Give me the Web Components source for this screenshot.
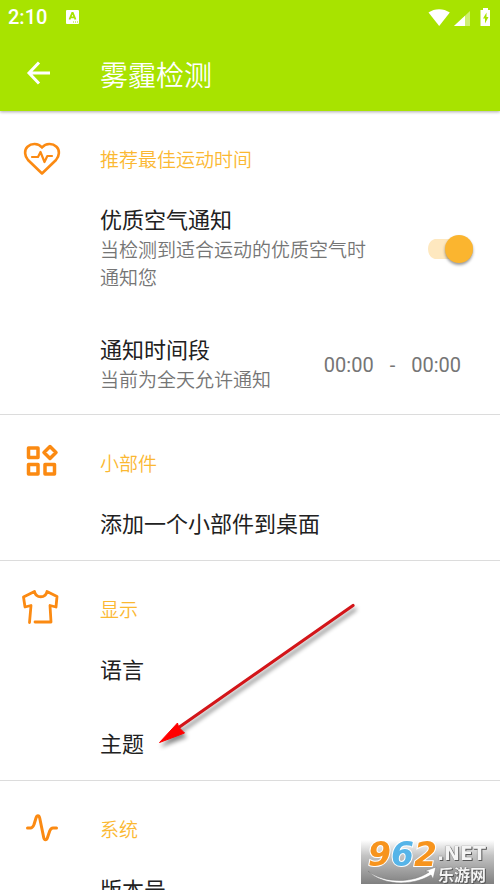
<!DOCTYPE html>
<html lang="zh-CN">
<head>
<meta charset="utf-8">
<meta name="viewport" content="width=device-width, initial-scale=1">
<title>雾霾检测</title>
<style>
  body {
    margin: 0;
    height: 100vh;
    overflow: hidden;
    background: #fff;
    font-family: Roboto, "Noto Sans CJK SC", sans-serif;
    color: #212121;
  }
</style>
</head>
<body>
<haze-settings></haze-settings>
<script>
const define = (name, html, setup) => {
  const template = document.createElement('template');
  template.innerHTML = html;
  customElements.define(name, class extends HTMLElement {
    constructor() {
      super();
      this.attachShadow({ mode: 'open' }).append(template.content.cloneNode(true));
    }
    connectedCallback() {
      if (setup) setup(this, this.shadowRoot);
    }
  });
};

define('status-bar', `
  <style>
    :host { display: flex; align-items: center; height: 34px; padding: 0 8px; color: #fff; font-size: 20px; font-weight: 500; }
    svg { display: block; }
    .app { margin-left: 18px; }
    .right { margin-left: auto; }
  </style>
  <span>2:10</span>
  <svg class="app" width="15" height="16" viewBox="0 0 15 16">
    <rect x="1" y="1" width="13" height="14" rx="1" fill="#fff"/>
    <path d="M4.500 10.500 7.200 3.800h.6l2.700 6.700M5.600 8.300h3.800" fill="none" stroke="#a8e300" stroke-width="1.800"/>
    <path d="M8 13h1M10 13h1M12 13h1" stroke="#a8e300"/>
  </svg>
  <svg class="right" width="64" height="22" viewBox="0 0 64 22">
    <path d="M.5 6.500C6.500 2 15.500 2 21.800 6.500L11.200 20Z" fill="#fff"/>
    <path d="M42 5v15H26Z" fill="#fff" opacity=".45"/>
    <path d="M37 9.700V20H26Z" fill="#fff"/>
    <path d="M55 2h5v2h2v16h-9.500V4H55Z" fill="#fff"/>
    <path d="M58.500 6.500 55 12.500h2v5l3.500-6.500h-2Z" fill="#a8e300"/>
  </svg>`);

define('app-bar', `
  <style>
    :host { display: block; background: #a8e300; box-shadow: 0 1px 3px #0005; position: relative; }
    .bar { display: flex; align-items: center; height: 77px; color: #fff; }
    button { width: 76px; height: 56px; margin-right: 24px; padding: 0 0 0 26px; border: 0; background: none; color: inherit; }
    svg { display: block; }
    h1 { margin: 0; padding-top: 3px; font-size: 28px; font-weight: 350; font-family: "Noto Sans CJK SC DemiLight", "Noto Sans CJK SC", sans-serif; line-height: 40px; }
  </style>
  <status-bar></status-bar>
  <div class="bar">
    <button aria-label="返回"><svg width="26" height="26" viewBox="0 0 26 26" fill="none" stroke="currentColor" stroke-width="3"><path d="M13 2.500 3 13l10 10.500M3 13h21"/></svg></button>
    <h1><slot></slot></h1>
  </div>`);

define('settings-section', `
  <style>
    :host { display: block; border-bottom: 1px solid #dcdcdc; }
    header { display: flex; align-items: center; height: 51px; padding-top: 20px; }
    .icon { width: 78px; padding-left: 22px; color: #fb8a12; }
    ::slotted(svg) { display: block; width: 40px; height: 40px; }
    h2 { margin: 0; padding-top: 4px; color: #fbb832; font-size: 19px; font-weight: 350; font-family: "Noto Sans CJK SC DemiLight", "Noto Sans CJK SC", sans-serif; line-height: 28px; }
  </style>
  <header><div class="icon"><slot name="icon"></slot></div><h2></h2></header>
  <slot></slot>`,
  (host, root) => { root.querySelector('h2').textContent = host.getAttribute('heading'); });

define('settings-row', `
  <style>
    :host { display: flex; align-items: center; padding: 25px 27px 21px 100px; line-height: 28px; }
    .text { flex: 1; }
    .title { font-size: 22px; }
    .title ::slotted(button) { all: unset; cursor: pointer; }
    .note { color: #757575; font-size: 19px; font-weight: 350; font-family: "Noto Sans CJK SC DemiLight", "Noto Sans CJK SC", sans-serif; }
  </style>
  <div class="text"><div class="title"><slot></slot></div><div class="note"><slot name="note"></slot></div></div>
  <slot name="control"></slot>`);

define('toggle-switch', `
  <style>
    :host { display: block; margin-left: 52px; }
    input { appearance: none; display: flex; align-items: center; justify-content: flex-start; width: 45px; height: 28px; margin: 0; border-radius: 14px;
      background: linear-gradient(#bdbdbd, #bdbdbd) center / 100% 20px no-repeat; cursor: pointer; }
    input::before { content: ""; width: 28px; height: 28px; border-radius: 50%; background: #fafafa; box-shadow: 0 2px 3px #0006; }
    input:checked { justify-content: flex-end; background-image: radial-gradient(circle at 10px 10px, #fee8bf 10px, transparent 11px), linear-gradient(90deg, transparent 10px, #fee8bf 10px); background-size: 45px 20px; }
    input:checked::before { background: #fbb52f; }
  </style>
  <input type="checkbox" role="switch" checked>`,
  (host, root) => root.querySelector('input').setAttribute('aria-label', host.getAttribute('label')));

define('time-range', `
  <style>
    :host { display: flex; align-items: center; gap: 16px; margin-right: 12px; color: #757575; font-size: 20px; }
    button { padding: 0; border: 0; background: none; color: inherit; font: inherit; }
  </style>
  <button aria-label="开始时间 00:00">00:00</button><span>-</span><button aria-label="结束时间 00:00">00:00</button>`);

define('pointer-arrow', `
  <style>
    :host { position: absolute; left: 150px; top: 595px; pointer-events: none; }
    svg { display: block; filter: drop-shadow(2px 4px 2px #0007); }
  </style>
  <svg width="220" height="160" viewBox="0 0 220 160" aria-hidden="true">
    <path d="M203 10.500 28 133" stroke="#d31519" stroke-width="3.200" stroke-linecap="round"/>
    <path d="M9.500 147.500 27.500 128l1 4 6 6Z" fill="#f00" stroke="#f00"/>
  </svg>`);

define('site-mark', `
  <style>
    :host { position: fixed; right: 6px; bottom: 6px; display: grid; width: 133px; height: 44px; background: linear-gradient(#fff 0, #c4c4c4 35%, #808080); font-weight: 700; line-height: 1; white-space: nowrap; }
    .swoosh { grid-area: 1 / 1; align-self: end; }
    .row { grid-area: 1 / 1; display: flex; align-items: flex-start; padding: 0 0 0 7px; }
    .num { font: italic 700 33px/30px "DejaVu Sans", sans-serif; color: #f7941d; paint-order: stroke; -webkit-text-stroke: 2px #fff; }
    .num i { color: #56b4e8; }
    .side { display: flex; flex-direction: column; color: #f4f4f4; text-shadow: 1px 1px 0 #555, 0 0 1px #333; }
    .net { font: 700 19px/26px "DejaVu Sans", sans-serif; }
    .cn { padding-left: 1px; font: 700 16px/16px "Noto Sans CJK SC", sans-serif; }
  </style>
  <svg class="swoosh" width="78" height="18" viewBox="0 0 78 18" aria-hidden="true"><path d="M7 5C22 17 51 18 68 6l-4-1 11-4-3 12-2-4C50 21 20 19 7 5Z" fill="#fff" stroke="#777" stroke-width=".5"/></svg>
  <div class="row"><span class="num">9<i>6</i>2</span><span class="side"><span class="net">.NET</span><span class="cn">乐游网</span></span></div>`);

define('haze-settings', `
  <style>
    :host { display: block; position: relative; }
  </style>
  <app-bar>雾霾检测</app-bar>
  <main>
    <settings-section heading="推荐最佳运动时间">
      <svg slot="icon" viewBox="0 -2 40 40" fill="none" stroke="currentColor" stroke-width="2.600" stroke-linejoin="round" stroke-linecap="round">
        <path d="M20 34.500 6 21C2.500 17 2 11 5.500 7.800 9.500 4 16 4 20 8.500 24 4 30.500 4 34.500 7.800 38 11 37.500 17 34 21Z"/>
        <path stroke-width="2.200" d="M10 18h6l2.500-5 4 10 2.800-6H30"/>
      </svg>
      <settings-row>优质空气通知<span slot="note">当检测到适合运动的优质空气时通知您</span><toggle-switch slot="control" label="优质空气通知"></toggle-switch></settings-row>
      <settings-row>通知时间段<span slot="note">当前为全天允许通知</span><time-range slot="control"></time-range></settings-row>
    </settings-section>
    <settings-section heading="小部件">
      <svg slot="icon" viewBox="0 0 40 40" fill="none" stroke="currentColor" stroke-width="3.500" stroke-linejoin="round">
        <path d="M6.500 7h9.500v9.500H6.500ZM6.500 23.500H16V33H6.500ZM23 23.500h9.500V33H23ZM28 5.500l6 6-6 6-6-6Z"/>
      </svg>
      <settings-row><button>添加一个小部件到桌面</button></settings-row>
    </settings-section>
    <settings-section heading="显示">
      <svg slot="icon" viewBox="0 0 40 40" fill="none" stroke="currentColor" stroke-width="2.800" stroke-linejoin="round" stroke-linecap="round">
        <path d="M7.500 35.500 9 18.500 3 20 1.500 10 12.500 4.500C14 11.500 23.500 11.500 25 4.500L35 9.500 34 20 28 18.500 29 35H13"/>
      </svg>
      <settings-row><button>语言</button></settings-row>
      <settings-row><button>主题</button></settings-row>
    </settings-section>
    <settings-section heading="系统">
      <svg slot="icon" viewBox="0 0 40 40" fill="none" stroke="currentColor" stroke-width="3" stroke-linejoin="round" stroke-linecap="round">
        <path d="M5.500 21h3c2 0 2.500-1 3.500-3.500L14 11c1-3 3-3 3.700 0l4 19.500c.6 3 2.800 3 3.800 0l2.200-6.500C28.500 22 29 21 31 21h3.500"/>
      </svg>
      <settings-row>版本号</settings-row>
    </settings-section>
  </main>
  <pointer-arrow></pointer-arrow>
  <site-mark></site-mark>`);
</script>
</body>
</html>
